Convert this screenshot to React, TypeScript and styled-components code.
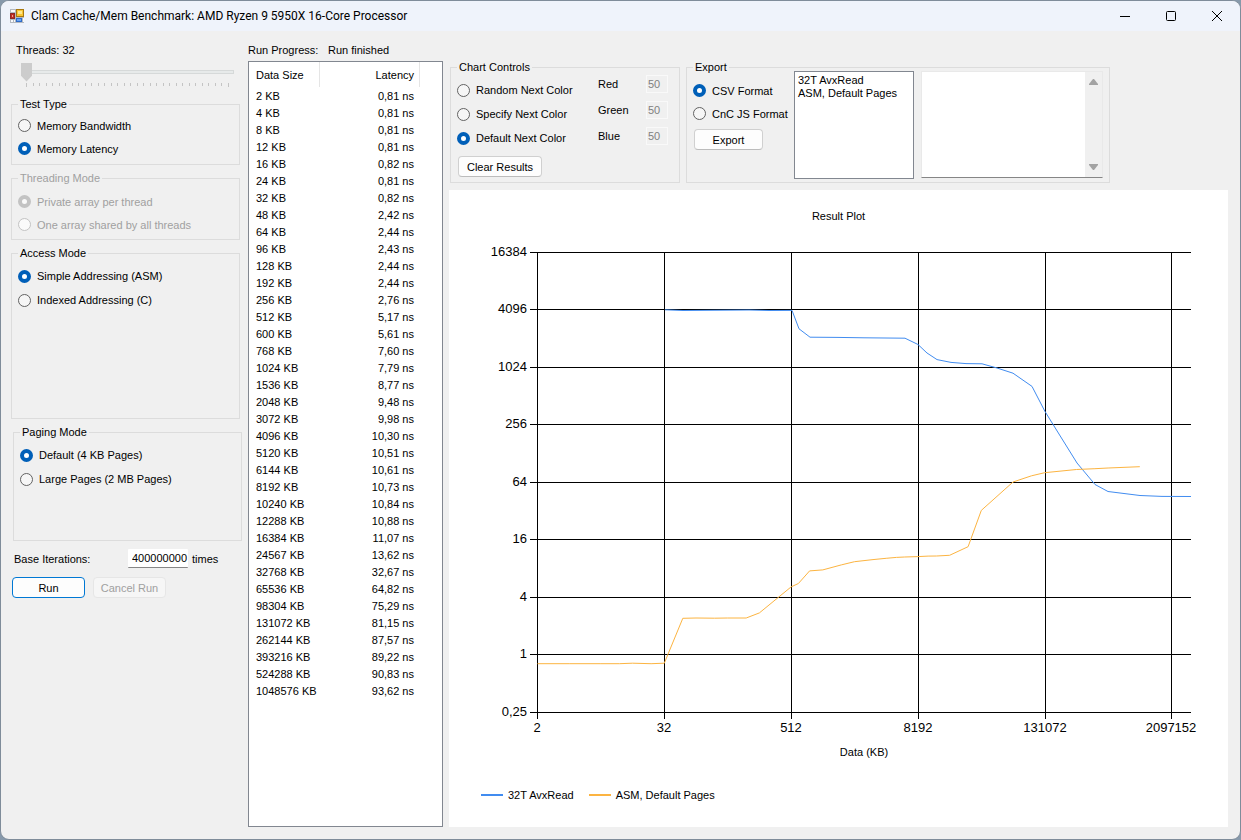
import React from 'react';
import styled, { createGlobalStyle, css } from 'styled-components';

const UI_FONT = '"Liberation Sans", Arial, sans-serif';
const BLUE = '#418cf0';
const ORANGE = '#fcb441';

const GlobalStyle = createGlobalStyle`
  *, *::before, *::after { box-sizing: border-box; }
  body {
    margin: 0;
    background: #8799ab;
    font-family: ${UI_FONT};
    font-size: 11px;
    line-height: 14px;
    color: #000;
  }
  button, input, select, textarea { font: inherit; color: inherit; margin: 0; }
`;

const Window = styled.div`
  display: flex;
  flex-direction: column;
  min-height: 100vh;
  border: 1px solid #7f8c9a;
  border-radius: 9px;
  overflow: hidden;
  background: #f0f0f0;
`;

const TitleBar = styled.header`
  display: flex;
  align-items: center;
  height: 30px;
  padding-left: 9px;
  background: #eff3fb;
`;

const TitleText = styled.h1`
  flex: 1;
  margin: 0 0 0 7px;
  font: 400 12px/16px Roboto, "Open Sans", sans-serif;
  white-space: nowrap;
`;

const CaptionButton = styled.button`
  display: grid;
  place-items: center;
  width: 46px;
  height: 30px;
  padding: 0;
  border: 0;
  background: none;
`;

const Body = styled.main`
  flex: 1;
  display: flex;
  padding: 12px 12px 12px 10px;
`;

const Sidebar = styled.section`
  flex: none;
  width: 231px;
  margin-right: 6px;
`;

const ThreadsLabel = styled.label`
  display: block;
  padding-left: 5px;
`;

const Slider = styled.input`
  display: block;
  appearance: none;
  width: 213px;
  height: 19px;
  margin: 5px 0 0 10px;
  background: none;

  &::-webkit-slider-runnable-track {
    box-sizing: border-box;
    height: 4px;
    border: 1px solid #d6d9d9;
    border-left: 0;
    background: #e7eaea;
  }
  &::-webkit-slider-thumb {
    appearance: none;
    box-sizing: border-box;
    width: 11px;
    height: 19px;
    margin-top: -8px;
    background: #cccccc;
    clip-path: polygon(0 0, 100% 0, 100% 70%, 50% 100%, 0 70%);
  }
`;

const Ticks = styled.div`
  display: flex;
  justify-content: space-between;
  width: 203px;
  height: 4px;
  margin: 2px 0 10px 15px;
`;

const Tick = styled.span<{ $end: boolean }>`
  width: 1px;
  height: ${(p) => (p.$end ? 4 : 3)}px;
  background: #c4c4c4;
`;

const Groups = styled.div`
  display: flex;
  flex-direction: column;
  gap: 6px;
`;

const Group = styled.fieldset<{ $height?: number; $indent?: boolean; $width?: number }>`
  width: ${(p) => p.$width ?? 229}px;
  min-height: ${(p) => p.$height ?? 0}px;
  min-width: 0;
  margin: 0 0 0 ${(p) => (p.$indent ? 2 : 0)}px;
  padding: 0 6px;
  border: 1px solid #dcdcdc;

  &:disabled { color: #a0a0a0; }
`;

const Legend = styled.legend`
  padding: 0 2px;
  line-height: 14px;
`;

const Options = styled.div<{ $top: number }>`
  padding-top: ${(p) => p.$top}px;
`;

const Option = styled.label<{ $height: number }>`
  display: flex;
  align-items: center;
  gap: 6px;
  height: ${(p) => p.$height}px;
  white-space: nowrap;
`;

const Radio = styled.input`
  appearance: none;
  flex: none;
  width: 13px;
  height: 13px;
  border: 1px solid #626262;
  border-radius: 50%;
  background: #f6f6f6;

  &:checked { border: 4px solid #005fb8; background: #fff; }
  &:disabled { border-color: #c3c3c3; background: #fafafa; }
`;

const Button = styled.button<{ $width: number; $primary?: boolean }>`
  width: ${(p) => p.$width}px;
  height: 21px;
  padding: 0;
  border: 1px solid #d0d0d0;
  border-bottom-color: #bcbcbc;
  border-radius: 4px;
  background: #fdfdfd;
  ${(p) => p.$primary && css`border-color: #0078d4;`}

  &:disabled { border-color: #e6e6e6; background: #f6f6f6; color: #a0a0a0; }
`;

const IterationsRow = styled.div`
  display: flex;
  align-items: center;
  margin: 8px 0 9px;
  padding-left: 3px;
`;

const IterationsLabel = styled.label`
  width: 114px;
`;

const IterationsInput = styled.input`
  width: 60px;
  height: 19px;
  margin-right: 4px;
  padding: 0 0 0 4px;
  border: 0;
  border-bottom: 1px solid #868686;
  border-radius: 1px;
  background: #fff;
`;

const Actions = styled.div`
  display: flex;
  gap: 8px;
  padding-left: 1px;
`;

const Results = styled.section`
  flex: none;
  display: flex;
  flex-direction: column;
  width: 195px;
  margin-right: 6px;
`;

const Progress = styled.p`
  display: flex;
  margin: 0 0 4px;
  white-space: nowrap;
`;

const ProgressLabel = styled.span`
  width: 80px;
`;

const ListView = styled.div`
  flex: 1;
  border: 1px solid #828790;
  background: #fff;
`;

const ResultTable = styled.table`
  width: 100%;
  table-layout: fixed;
  border-collapse: separate;
  border-spacing: 0;
`;

const HeadCell = styled.th<{ $width?: number; $right?: boolean }>`
  width: ${(p) => (p.$width ? `${p.$width}px` : 'auto')};
  height: 25px;
  padding: 0 5px 0 7px;
  border-right: ${(p) => (p.$width ? '1px solid #e5e5e5' : '0')};
  font-weight: 400;
  text-align: ${(p) => (p.$right ? 'right' : 'left')};
`;

const Cell = styled.td<{ $right?: boolean }>`
  height: 17px;
  padding: 0 6px 0 7px;
  text-align: ${(p) => (p.$right ? 'right' : 'left')};
  white-space: nowrap;
`;

const Workspace = styled.section`
  flex: 1;
  min-width: 0;
  display: flex;
  flex-direction: column;
`;

const Toolbar = styled.div`
  display: flex;
  gap: 6px;
  padding: 17px 0 7px 1px;
`;

const Columns = styled.div`
  display: flex;
  justify-content: space-between;
`;

const ButtonSlot = styled.div<{ $top: number }>`
  padding: ${(p) => p.$top}px 0 0 1px;
`;

const Channels = styled.div`
  display: flex;
  flex-direction: column;
  gap: 8px;
  padding: 1px 5px 0 0;
`;

const Channel = styled.label`
  display: flex;
  align-items: center;
  justify-content: space-between;
  width: 70px;
  height: 18px;
`;

const ChannelInput = styled.input`
  width: 22px;
  height: 18px;
  padding: 0 1px;
  border: 1px solid #f9f9f9;
  background: #f0f0f0;

  &:disabled { color: #808080; }
`;

const ExportPanel = styled.div`
  display: flex;
  height: 108px;
  margin-top: -3px;
`;

const ExportOptions = styled.div`
  width: 101px;
  padding-top: 8px;
`;

const SeriesList = styled.select`
  appearance: none;
  width: 120px;
  margin-right: 7px;
  padding: 2px 3px;
  border: 1px solid #828790;
  border-radius: 0;
  background: #fff;
  overflow: hidden;
  outline: 0;
`;

const SeriesOption = styled.option`
  min-height: 13px;
  height: 13px;
  padding: 0;
  line-height: 13px;
`;

const OutputBox = styled.div`
  display: flex;
  width: 182px;
  height: 107px;
  border: 1px solid #e9e9e9;
  border-bottom-color: #868686;
  background: #fff;
`;

const Output = styled.textarea`
  flex: 1;
  min-width: 0;
  padding: 2px;
  border: 0;
  background: #fff;
  resize: none;
  overflow: hidden;
  outline: 0;
`;

const ScrollBar = styled.div`
  display: flex;
  flex-direction: column;
  justify-content: space-between;
  width: 17px;
  background: #f0f0f0;
`;

const ScrollButton = styled.button`
  display: grid;
  place-items: center;
  height: 20px;
  padding: 0;
  border: 0;
  background: none;
`;

const ChartPanel = styled.figure`
  flex: 1;
  display: flex;
  flex-direction: column;
  margin: 0;
  padding: 19px 0 25px;
  background: #fff;
`;

const ChartTitle = styled.figcaption`
  padding-bottom: 1px;
  text-align: center;
`;

const Plot = styled.svg`
  flex: 1;
  width: 100%;
  min-height: 0;
  font-family: ${UI_FONT};
`;

const ChartLegend = styled.ul`
  display: flex;
  gap: 15px;
  margin: 24px 0 0;
  padding: 0 0 0 32px;
  list-style: none;
`;

const LegendItem = styled.li<{ $color: string }>`
  display: flex;
  align-items: center;
  gap: 5px;

  &::before {
    content: "";
    width: 22px;
    height: 2px;
    background: ${(p) => p.$color};
  }
`;

const RESULTS: [number, string][] = [
  [2, '0,81'], [4, '0,81'], [8, '0,81'], [12, '0,81'], [16, '0,82'], [24, '0,81'],
  [32, '0,82'], [48, '2,42'], [64, '2,44'], [96, '2,43'], [128, '2,44'], [192, '2,44'],
  [256, '2,76'], [512, '5,17'], [600, '5,61'], [768, '7,60'], [1024, '7,79'],
  [1536, '8,77'], [2048, '9,48'], [3072, '9,98'], [4096, '10,30'], [5120, '10,51'],
  [6144, '10,61'], [8192, '10,73'], [10240, '10,84'], [12288, '10,88'],
  [16384, '11,07'], [24567, '13,62'], [32768, '32,67'], [65536, '64,82'],
  [98304, '75,29'], [131072, '81,15'], [262144, '87,57'], [393216, '89,22'],
  [524288, '90,83'], [1048576, '93,62'],
];

// Plot geometry, in viewBox units; both axes are logarithmic.
const LEFT = 88;
const RIGHT = 742;
const BOTTOM = 488;
const X_TICKS: [number, string][] = [
  [88, '2'], [215, '32'], [342, '512'], [469, '8192'], [596, '131072'], [722, '2097152'],
];
const Y_TICKS: [number, string][] = [
  [28, '16384'], [85, '4096'], [143, '1024'], [200, '256'], [258, '64'],
  [315, '16'], [373, '4'], [430, '1'], [488, '0,25'],
];

const latencyPoints = RESULTS.map(([size, ns]) => {
  const value = Number(ns.replace(',', '.'));
  const x = LEFT + 0.5 + Math.log2(size / 2) * 31.7;
  const y = BOTTOM + 0.5 - Math.log2(value / 0.25) * 28.75;
  return `${x.toFixed(1)},${y.toFixed(1)}`;
}).join(' ');

const bandwidthPoints = [
  [216, 85.8], [234, 86.5], [300, 86], [320, 86.5], [343, 86.4], [350, 104.8], [361, 113.2],
  [388, 113.4], [415, 113.8], [456, 114.2], [469, 120.5], [478, 129], [488, 135.6],
  [502, 138.4], [517, 139.6], [533, 139.8], [548, 144], [564, 149.2], [583, 162.4],
  [596, 187.5], [628, 239], [646, 260.5], [659, 267.5], [691, 271.5], [713, 272.4],
  [742, 272.5],
].map((p) => p.join(',')).join(' ');

function AppIcon() {
  return (
    <svg width="14" height="14" viewBox="0 0 14 14" aria-hidden="true">
      <rect width="14" height="14" fill="#b4b9c0" />
      <path d="M1 1h4v2H1zM1 11h2v2H1zM4 11h1v2H4zM13 9h1v4h-1z" fill="#f7f9fc" />
      <rect x="6.500" y="0.500" width="7" height="7" fill="#f9c632" stroke="#a8780f" />
      <rect x="8" y="2" width="4" height="3" fill="#fde68c" />
      <rect x="0.500" y="4.500" width="4" height="5" fill="#c02a22" stroke="#8d2a25" />
      <rect x="2" y="6" width="1" height="2" fill="#f0a090" />
      <rect x="6.500" y="9.500" width="5" height="3" fill="#6aa4f2" stroke="#2f6bc8" />
    </svg>
  );
}

interface RadioProps {
  name: string;
  label: string;
  height: number;
  checked?: boolean;
}

function RadioOption({ name, label, height, checked }: RadioProps) {
  return (
    <Option $height={height}>
      <Radio type="radio" name={name} defaultChecked={checked} />
      {label}
    </Option>
  );
}

function Chart() {
  return (
    <ChartPanel>
      <ChartTitle>Result Plot</ChartTitle>
      <Plot viewBox="0 0 779 540" role="img" aria-label="Result plot by data size">
        <g stroke="#000" shapeRendering="crispEdges">
          {Y_TICKS.map(([y]) => (
            <line key={y} x1={LEFT - 7} x2={RIGHT} y1={y + 0.5} y2={y + 0.5} />
          ))}
          {X_TICKS.map(([x]) => (
            <line key={x} x1={x + 0.5} x2={x + 0.5} y1={28} y2={BOTTOM + 7} />
          ))}
        </g>
        <g fontSize="13">
          {Y_TICKS.map(([y, text]) => (
            <text key={text} x={78} y={y + 4} textAnchor="end">{text}</text>
          ))}
          {X_TICKS.map(([x, text]) => (
            <text key={text} x={x} y={508} textAnchor="middle">{text}</text>
          ))}
        </g>
        <text x={415} y={532} fontSize="11" textAnchor="middle">Data (KB)</text>
        <polyline points={bandwidthPoints} fill="none" stroke={BLUE} />
        <polyline points={latencyPoints} fill="none" stroke={ORANGE} />
      </Plot>
      <ChartLegend>
        <LegendItem $color={BLUE}>32T AvxRead</LegendItem>
        <LegendItem $color={ORANGE}>ASM, Default Pages</LegendItem>
      </ChartLegend>
    </ChartPanel>
  );
}

export default function App() {
  return (
    <>
      <GlobalStyle />
      <Window>
        <TitleBar>
          <AppIcon />
          <TitleText>Clam Cache/Mem Benchmark: AMD Ryzen 9 5950X 16-Core Processor</TitleText>
          <CaptionButton aria-label="Minimize">
            <svg width="10" height="10" viewBox="0 0 10 10"><path d="M0 5.5h10" stroke="#000" /></svg>
          </CaptionButton>
          <CaptionButton aria-label="Maximize">
            <svg width="10" height="10" viewBox="0 0 10 10">
              <rect x="0.5" y="0.5" width="9" height="9" rx="1" fill="none" stroke="#000" />
            </svg>
          </CaptionButton>
          <CaptionButton aria-label="Close">
            <svg width="10" height="10" viewBox="0 0 10 10"><path d="M0 0L10 10M10 0L0 10" stroke="#000" /></svg>
          </CaptionButton>
        </TitleBar>

        <Body>
          <Sidebar>
            <ThreadsLabel htmlFor="threads">Threads: 32</ThreadsLabel>
            <Slider id="threads" type="range" min={1} max={32} defaultValue={1} />
            <Ticks>
              {Array.from({ length: 32 }, (_, i) => (
                <Tick key={i} $end={i === 0 || i === 31} />
              ))}
            </Ticks>
            <Groups>
              <Group $height={68}>
                <Legend>Test Type</Legend>
                <Options $top={3}>
                  <RadioOption name="test" label="Memory Bandwidth" height={23} />
                  <RadioOption name="test" label="Memory Latency" height={23} checked />
                </Options>
              </Group>
              <Group $height={69} disabled>
                <Legend>Threading Mode</Legend>
                <Options $top={5}>
                  <RadioOption name="threading" label="Private array per thread" height={23} checked />
                  <RadioOption name="threading" label="One array shared by all threads" height={23} />
                </Options>
              </Group>
              <Group $height={173}>
                <Legend>Access Mode</Legend>
                <Options $top={4}>
                  <RadioOption name="access" label="Simple Addressing (ASM)" height={24} checked />
                  <RadioOption name="access" label="Indexed Addressing (C)" height={24} />
                </Options>
              </Group>
              <Group $height={116} $indent>
                <Legend>Paging Mode</Legend>
                <Options $top={4}>
                  <RadioOption name="paging" label="Default (4 KB Pages)" height={24} checked />
                  <RadioOption name="paging" label="Large Pages (2 MB Pages)" height={24} />
                </Options>
              </Group>
            </Groups>
            <IterationsRow>
              <IterationsLabel htmlFor="iterations">Base Iterations:</IterationsLabel>
              <IterationsInput id="iterations" defaultValue="400000000" />
              times
            </IterationsRow>
            <Actions>
              <Button $width={73} $primary>Run</Button>
              <Button $width={73} disabled>Cancel Run</Button>
            </Actions>
          </Sidebar>

          <Results>
            <Progress>
              <ProgressLabel>Run Progress:</ProgressLabel>
              <span>Run finished</span>
            </Progress>
            <ListView>
              <ResultTable>
                <thead>
                  <tr>
                    <HeadCell $width={71}>Data Size</HeadCell>
                    <HeadCell $width={100} $right>Latency</HeadCell>
                    <HeadCell aria-hidden="true" />
                  </tr>
                </thead>
                <tbody>
                  {RESULTS.map(([size, ns]) => (
                    <tr key={size}>
                      <Cell>{size} KB</Cell>
                      <Cell $right>{ns} ns</Cell>
                    </tr>
                  ))}
                </tbody>
              </ResultTable>
            </ListView>
          </Results>

          <Workspace>
            <Toolbar>
              <Group $width={230} $height={123}>
                <Legend>Chart Controls</Legend>
                <Columns>
                  <Options $top={4}>
                    <RadioOption name="color" label="Random Next Color" height={24} />
                    <RadioOption name="color" label="Specify Next Color" height={24} />
                    <RadioOption name="color" label="Default Next Color" height={24} checked />
                    <ButtonSlot $top={6}>
                      <Button $width={84}>Clear Results</Button>
                    </ButtonSlot>
                  </Options>
                  <Channels>
                    {['Red', 'Green', 'Blue'].map((name) => (
                      <Channel key={name}>
                        {name}
                        <ChannelInput defaultValue="50" disabled />
                      </Channel>
                    ))}
                  </Channels>
                </Columns>
              </Group>
              <Group $width={424} $height={123}>
                <Legend>Export</Legend>
                <ExportPanel>
                  <ExportOptions>
                    <RadioOption name="format" label="CSV Format" height={23} checked />
                    <RadioOption name="format" label="CnC JS Format" height={23} />
                    <ButtonSlot $top={4}>
                      <Button $width={69}>Export</Button>
                    </ButtonSlot>
                  </ExportOptions>
                  <SeriesList size={8} aria-label="Result series">
                    <SeriesOption>32T AvxRead</SeriesOption>
                    <SeriesOption>ASM, Default Pages</SeriesOption>
                  </SeriesList>
                  <OutputBox>
                    <Output aria-label="Exported data" />
                    <ScrollBar>
                      <ScrollButton aria-label="Scroll up">
                        <svg width="9" height="6" viewBox="0 0 9 6"><path d="M0 6V5L4 0h1l4 5v1z" fill="#a3a3a3" /></svg>
                      </ScrollButton>
                      <ScrollButton aria-label="Scroll down">
                        <svg width="9" height="6" viewBox="0 0 9 6"><path d="M0 0v1l4 5h1l4-5V0z" fill="#a3a3a3" /></svg>
                      </ScrollButton>
                    </ScrollBar>
                  </OutputBox>
                </ExportPanel>
              </Group>
            </Toolbar>
            <Chart />
          </Workspace>
        </Body>
      </Window>
    </>
  );
}
